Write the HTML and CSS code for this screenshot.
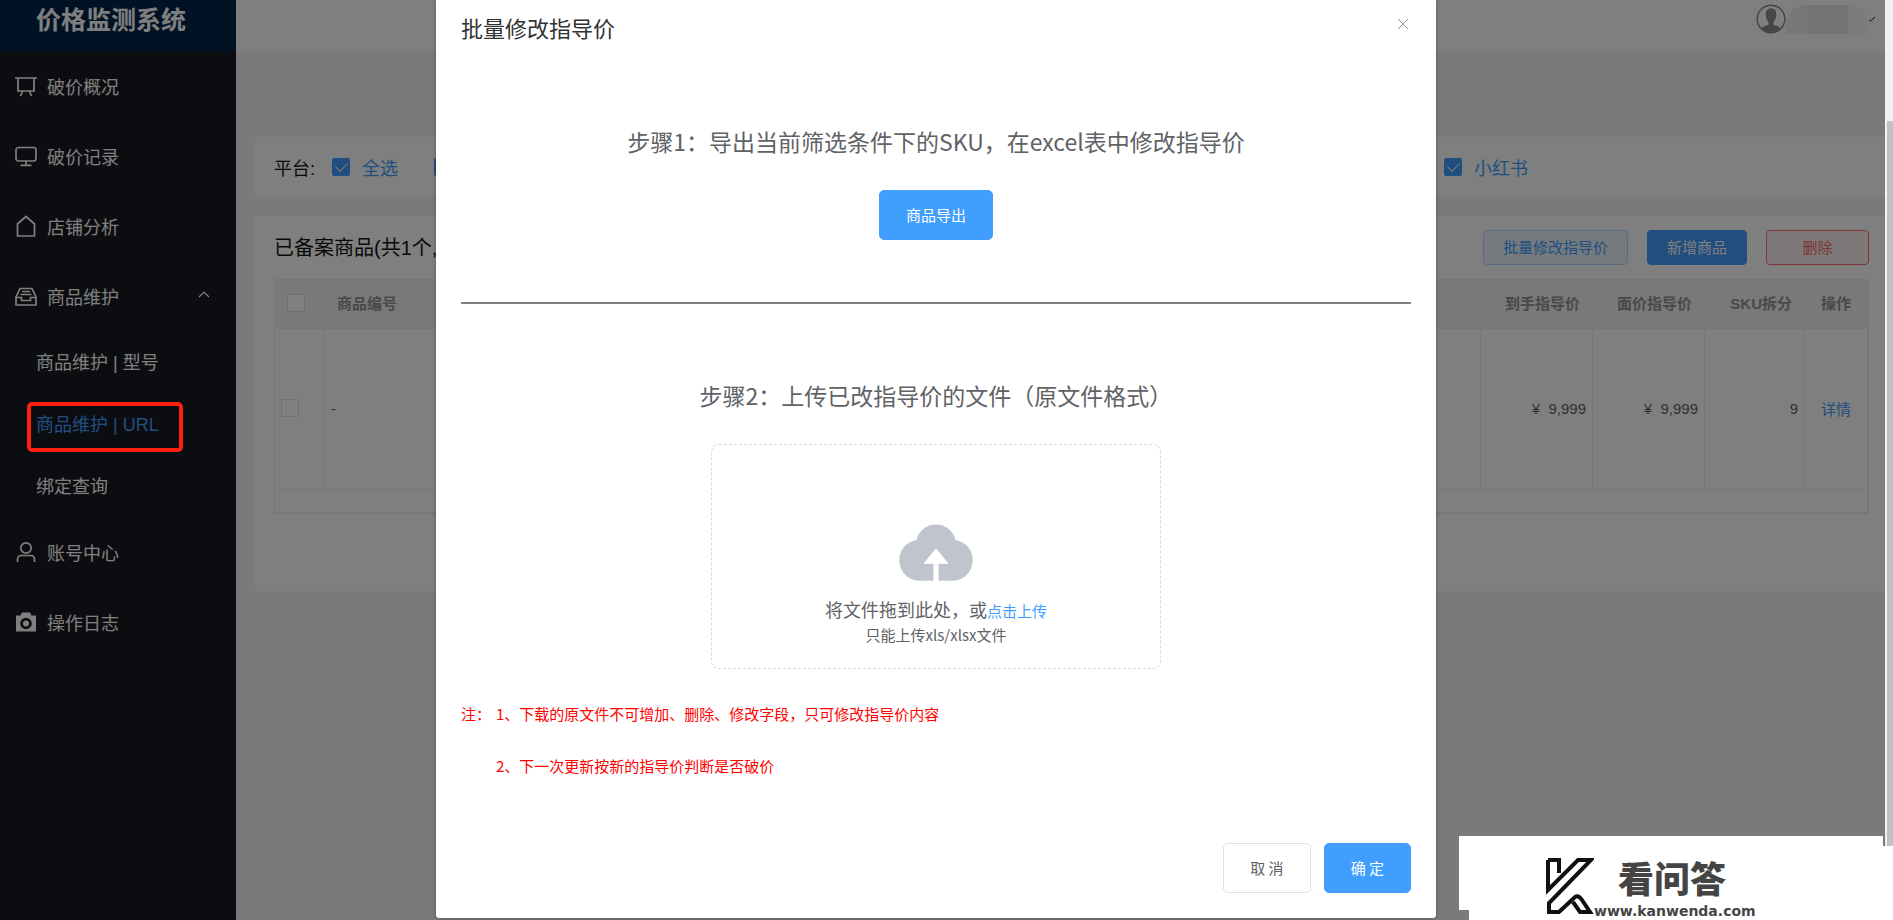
FILE: index.html
```html
<!DOCTYPE html>
<html lang="zh-CN">
<head>
<meta charset="utf-8">
<title>价格监测系统</title>
<link rel="stylesheet" href="styles.css">
</head>
<body>
<div class="app">
  <aside class="sidebar">
    <h1 class="brand">价格监测系统</h1>
    <nav class="menu">
      <a class="menu-item" href="#">
        <svg class="icon" viewBox="0 0 22 22"><path d="M0 3h22M3 3v13h16V3M7.500 16.500l-2 4.500M14.500 16.500l2 4.500"/></svg>破价概况</a>
      <a class="menu-item" href="#">
        <svg class="icon" viewBox="0 0 22 22"><rect x="1" y="2.500" width="20" height="13.500" rx="2.500"/><path d="M11 16v4M5.500 20.300h11"/></svg>破价记录</a>
      <a class="menu-item" href="#">
        <svg class="icon" viewBox="0 0 22 22"><path d="M2.500 21V9L11 1.500 19.500 9v12z"/></svg>店铺分析</a>
      <a class="menu-item" href="#">
        <svg class="icon" viewBox="0 0 22 22"><path d="M1 20v-8l4-8.500h12l4 8.500v8zM1 12.500h5.500v3h9v-3H21M7 6.500h8M5.500 9.500h11"/></svg>商品维护
        <svg class="caret" viewBox="0 0 12 8"><path d="M1 7l5-5 5 5"/></svg></a>
      <a class="submenu-item" href="#">商品维护 | 型号</a>
      <a class="submenu-item current" href="#">商品维护 | URL</a>
      <a class="submenu-item" href="#">绑定查询</a>
      <a class="menu-item" href="#">
        <svg class="icon" viewBox="0 0 22 22"><circle cx="11" cy="7" r="5.200"/><path d="M2.500 21v-2.500c0-2.500 1.500-4 4-4h9c2.500 0 4 1.500 4 4V21"/></svg>账号中心</a>
      <a class="menu-item" href="#">
        <svg class="icon solid" viewBox="0 0 22 22"><path fill-rule="evenodd" d="M1 4.500h4.500l1.500-3h8l1.500 3H21v16H1zM11 6.700a5.800 5.800 0 1 0 0 11.600 5.800 5.800 0 0 0 0-11.600z"/><circle cx="11" cy="12.500" r="3"/></svg>操作日志</a>
    </nav>
  </aside>

  <main class="main">
    <header class="topbar">
      <svg class="avatar" viewBox="0 0 30 30"><circle cx="15" cy="15" r="13.800" fill="#fff" stroke="#8c8c8c" stroke-width="1.500"/><path fill="#8c8c8c" d="M15 4.500c4 0 5.500 2.500 5.300 6.500-.2 3.500-1.300 5.500-2.800 7v3c3 .8 6 1.500 7.500 3.500a13.500 13.500 0 0 1-20 0c1.500-2 4.500-2.700 7.500-3.500v-3c-1.500-1.500-2.600-3.500-2.800-7C9.500 7 11 4.500 15 4.500z"/></svg>
      <span class="user-name"></span>
      <svg class="user-caret" viewBox="0 0 8 6"><path d="M1 4l1.500 1L7 1"/></svg>
    </header>

    <div class="content">
      <section class="card filter">
        <span>平台:</span>
        <label class="option"><input class="check" type="checkbox" checked>全选</label>
        <span class="option platforms"><input class="check" type="checkbox" checked aria-label="平台"></span>
        <label class="option"><input class="check" type="checkbox" checked>小红书</label>
      </section>

      <section class="card goods">
        <div class="goods-head">
          <h2 class="goods-title">已备案商品(共1个,</h2>
          <button class="btn btn-plain">批量修改指导价</button>
          <button class="btn btn-solid">新增商品</button>
          <button class="btn btn-danger">删除</button>
        </div>
        <table class="table">
          <colgroup><col class="col-check"><col><col class="col-price"><col class="col-price"><col class="col-sku"><col class="col-action"></colgroup>
          <thead>
            <tr><th class="center"><input class="check" type="checkbox" aria-label="全部选择"></th><th>商品编号</th><th class="num">到手指导价</th><th class="num">面价指导价</th><th class="num">SKU拆分</th><th class="center">操作</th></tr>
          </thead>
          <tbody>
            <tr><td><input class="check" type="checkbox" aria-label="选择商品"></td><td>-</td><td class="num">¥&nbsp; 9,999</td><td class="num">¥&nbsp; 9,999</td><td class="num">9</td><td class="center"><a class="link" href="#">详情</a></td></tr>
          </tbody>
          <tfoot><tr><td colspan="6"></td></tr></tfoot>
        </table>
      </section>
    </div>
  </main>

  <div class="overlay">
    <div class="dialog" role="dialog" aria-labelledby="dialog-title">
      <div class="dialog-head">
        <h2 class="dialog-title" id="dialog-title">批量修改指导价</h2>
        <button class="close" aria-label="关闭"><svg viewBox="0 0 12 12"><path d="M1 1l10 10M11 1L1 11"/></svg></button>
      </div>
      <section class="step step-export">
        <p class="step-text">步骤1：导出当前筛选条件下的SKU，在excel表中修改指导价</p>
        <button class="btn-large primary">商品导出</button>
      </section>
      <section class="step step-upload">
        <p class="step-text">步骤2：上传已改指导价的文件（原文件格式）</p>
        <div class="dropzone">
          <svg class="cloud" viewBox="0 0 74 56"><path d="M20 56A20 20 0 0 1 18 16.300 19.500 19.500 0 0 1 56 16.300 20 20 0 0 1 54 56H39.500V39.500H49.500L37 24.500 24.500 39.500H34.500V56z"/></svg>
          <p class="drop-text">将文件拖到此处，或<a class="link" href="#">点击上传</a></p>
          <p class="drop-tip">只能上传xls/xlsx文件</p>
        </div>
      </section>
      <div class="notes">
        <span>注：</span>
        <ol class="note-list"><li>1、下载的原文件不可增加、删除、修改字段，只可修改指导价内容</li><li>2、下一次更新按新的指导价判断是否破价</li></ol>
      </div>
      <div class="dialog-foot">
        <button class="btn-large">取 消</button>
        <button class="btn-large primary">确 定</button>
      </div>
    </div>
  </div>
  <div class="highlight"></div>
</div>
<div class="scrollbar"><div class="thumb"></div></div>

<div class="watermark">
  <svg class="mark" viewBox="0 0 48 58"><path d="M2 3h11v13M2 3v30L32 3h13L3 46v9h10l16-15c3-2 5 0 7 3l8 12H34l-7-10"/></svg>
  <div class="mark-text"><strong class="mark-name">看问答</strong><span class="mark-url">www.kanwenda.com</span></div>
</div>
</body>
</html>
```

FILE: styles.css
```css
* { box-sizing: border-box; }

body {
  display: flex;
  height: 100vh;
  margin: 0;
  overflow: hidden;
  font-family: "Liberation Sans", "Noto Sans CJK SC", sans-serif;
  font-size: 15px;
  color: #606266;
}

h1, h2, p, ol { margin: 0; padding: 0; font-weight: 400; }
ol { list-style: none; }
a { text-decoration: none; }
button { font: inherit; cursor: pointer; }
svg { display: block; flex: none; fill: none; }

.app { position: relative; display: flex; flex: 1; min-width: 0; }

/* Sidebar */
.sidebar { flex: none; width: 236px; background: #191b21; color: #fff; }
.brand {
  height: 51px;
  padding-left: 36px;
  background: #002548;
  font-size: 25px;
  font-weight: 700;
  line-height: 40px;
}
.menu-item, .submenu-item { display: flex; align-items: center; color: #fff; font-size: 18px; }
.menu-item { height: 70px; padding: 0 26px 0 15px; gap: 10px; }
.submenu-item { height: 62px; padding: 0 0 2px 36px; white-space: pre; }
.current { color: #409eff; }
.icon { width: 22px; height: 22px; stroke: #fff; stroke-width: 1.7; }
.icon.solid { fill: #fff; stroke: none; }
.caret { width: 12px; height: 8px; margin: 0 0 4px auto; stroke: #fff; stroke-width: 1.2; }

/* Page */
.main { flex: 1; min-width: 0; background: #f4f4f4; }
.topbar {
  display: flex;
  align-items: flex-start;
  justify-content: flex-end;
  height: 51px;
  padding: 4px 9px 0 0;
  background: #fff;
}
.avatar { width: 30px; height: 30px; }
.user-name {
  width: 82px;
  height: 29px;
  margin-top: 1px;
  border-radius: 20px 20px 0 0;
  background: linear-gradient(90deg, #eee 25%, #e6e8e8 25%, #e4e8e8 75%, #f6f6f6 75%);
}
.user-caret { width: 8px; height: 6px; margin-top: 12px; stroke: #111; }
.content { display: grid; gap: 19px; padding: 86px 0 0 19px; }
.card { background: #fff; padding-left: 19px; }

.filter { display: flex; align-items: center; height: 60px; padding-bottom: 1px; color: #111; font-size: 18px; }
.option { display: flex; align-items: center; gap: 12px; margin-left: 17px; color: #409eff; }
.option + .option { margin-left: 36px; }
.platforms { flex: 0 0 974px; }

.check {
  display: block;
  flex: none;
  appearance: none;
  width: 18px;
  height: 18px;
  margin: 0;
  border: 1px solid #dcdfe6;
  border-radius: 2px;
  background: #fff;
}
.check:checked { display: grid; place-items: center; border-color: #409eff; background: #409eff; }
.check:checked::before {
  content: "";
  width: 10px;
  height: 6px;
  margin-bottom: 3px;
  border: solid #fff;
  border-width: 0 0 1px 1px;
  transform: rotate(-45deg);
}

.goods { height: 375px; padding: 14px 16px 0 19px; }
.goods-head { display: flex; gap: 19px; margin-bottom: 14px; }
.goods-title { flex: 1; color: #111; font-size: 20px; line-height: 36px; height: 35px; }
.btn { height: 35px; padding: 0 19px 2px; border: 1px solid; border-radius: 4px; }
.btn-plain { background: #ecf5ff; border-color: #b3d8ff; color: #409eff; }
.btn-solid { background: #409eff; border-color: #409eff; color: #fff; }
.btn-danger { width: 103px; background: #fef0f0; border-color: #f56c6c; color: #f56c6c; }

.table {
  width: 100%;
  table-layout: fixed;
  border-collapse: separate;
  border-spacing: 0;
  border: 1px solid #ebeef5;
  border-width: 1px 2px 2px 1px;
}
.col-check { width: 50px; }
.col-price { width: 112px; }
.col-sku { width: 100px; }
.col-action { width: 62px; }
.table th, .table td { border-right: 1px solid #ebeef5; border-bottom: 1px solid #ebeef5; text-align: left; }
.table th:last-child, .table td:last-child { border-right: 0; }
.table th { height: 49px; padding: 0 12px 3px; background: #f2f2f2; color: #909399; }
.table td { height: 161px; padding: 0 6px 2px; }
.table tfoot td { height: 22px; border: 0; }
.table .num { text-align: right; }
.table .center { text-align: center; }
.link { color: #409eff; font-size: 15px; }

/* Dialog */
.overlay {
  position: absolute;
  inset: 0;
  display: flex;
  align-items: flex-start;
  justify-content: center;
  padding-right: 13px;
  background: rgba(0, 0, 0, .5);
}
.dialog {
  width: 1000px;
  padding: 14px 25px 25px;
  border-radius: 0 0 3px 3px;
  background: #fff;
  box-shadow: 0 1px 4px rgba(0, 0, 0, .3);
  font-family: "Noto Sans CJK SC", sans-serif;
}
.dialog-head { display: flex; align-items: flex-start; justify-content: space-between; height: 30px; }
.dialog-title { color: #303133; font-size: 22px; line-height: 26px; }
.close { padding: 4px 2px; border: 0; background: none; }
.close svg { width: 12px; height: 12px; stroke: #909399; }
.step { display: flex; flex-direction: column; align-items: center; gap: 36px; }
.step-export { padding: 84px 0 62px; border-bottom: 2px solid #808080; }
.step-upload { padding: 78px 0 35px; }
.step-text { font-size: 23px; line-height: 26px; }
.btn-large {
  height: 50px;
  padding: 0 26px 2px;
  border: 1px solid #dcdfe6;
  border-radius: 5px;
  background: #fff;
  color: #606266;
}
.btn-large.primary { border-color: #409eff; background: #409eff; color: #fff; }
.dropzone {
  display: flex;
  flex-direction: column;
  align-items: center;
  width: 450px;
  height: 225px;
  padding-top: 78px;
  border: 1px dashed #d9d9d9;
  border-radius: 8px;
}
.cloud { width: 76px; height: 58px; margin-bottom: 16px; fill: #c0c4cc; }
.drop-text, .drop-tip { line-height: 24px; }
.drop-text { font-size: 18px; }
.notes { display: grid; grid-template-columns: 35px 1fr; color: #f00; line-height: 20px; }
.note-list { display: grid; gap: 32px; }
.dialog-foot { display: flex; justify-content: flex-end; gap: 13px; margin-top: 67px; }

.highlight {
  position: absolute;
  left: 27px;
  top: 402px;
  width: 156px;
  height: 50px;
  border: 4px solid #ff2010;
  border-radius: 5px;
}

.scrollbar { flex: none; width: 8px; padding: 121px 0 0 2px; background: #f1f1f1; }
.thumb { height: 100%; background: #c1c1c1; }

/* Watermark */
.watermark {
  position: fixed;
  right: 0;
  bottom: 0;
  display: flex;
  width: 424px;
  height: 74px;
  padding: 11px 0 0 77px;
  background: #fff;
}
.watermark::before {
  content: "";
  position: absolute;
  z-index: -1;
  right: 10px;
  bottom: 10px;
  width: 424px;
  height: 74px;
  background: #fff;
}
.mark { width: 48px; height: 58px; stroke: #111; stroke-width: 4; }
.mark-text { display: flex; flex-direction: column; color: #444; font-weight: 700; }
.mark-name { padding-left: 24px; font-size: 36px; font-weight: 900; line-height: 48px; }
.mark-url { font-family: "DejaVu Sans", sans-serif; font-size: 14px; line-height: 12px; }
```
